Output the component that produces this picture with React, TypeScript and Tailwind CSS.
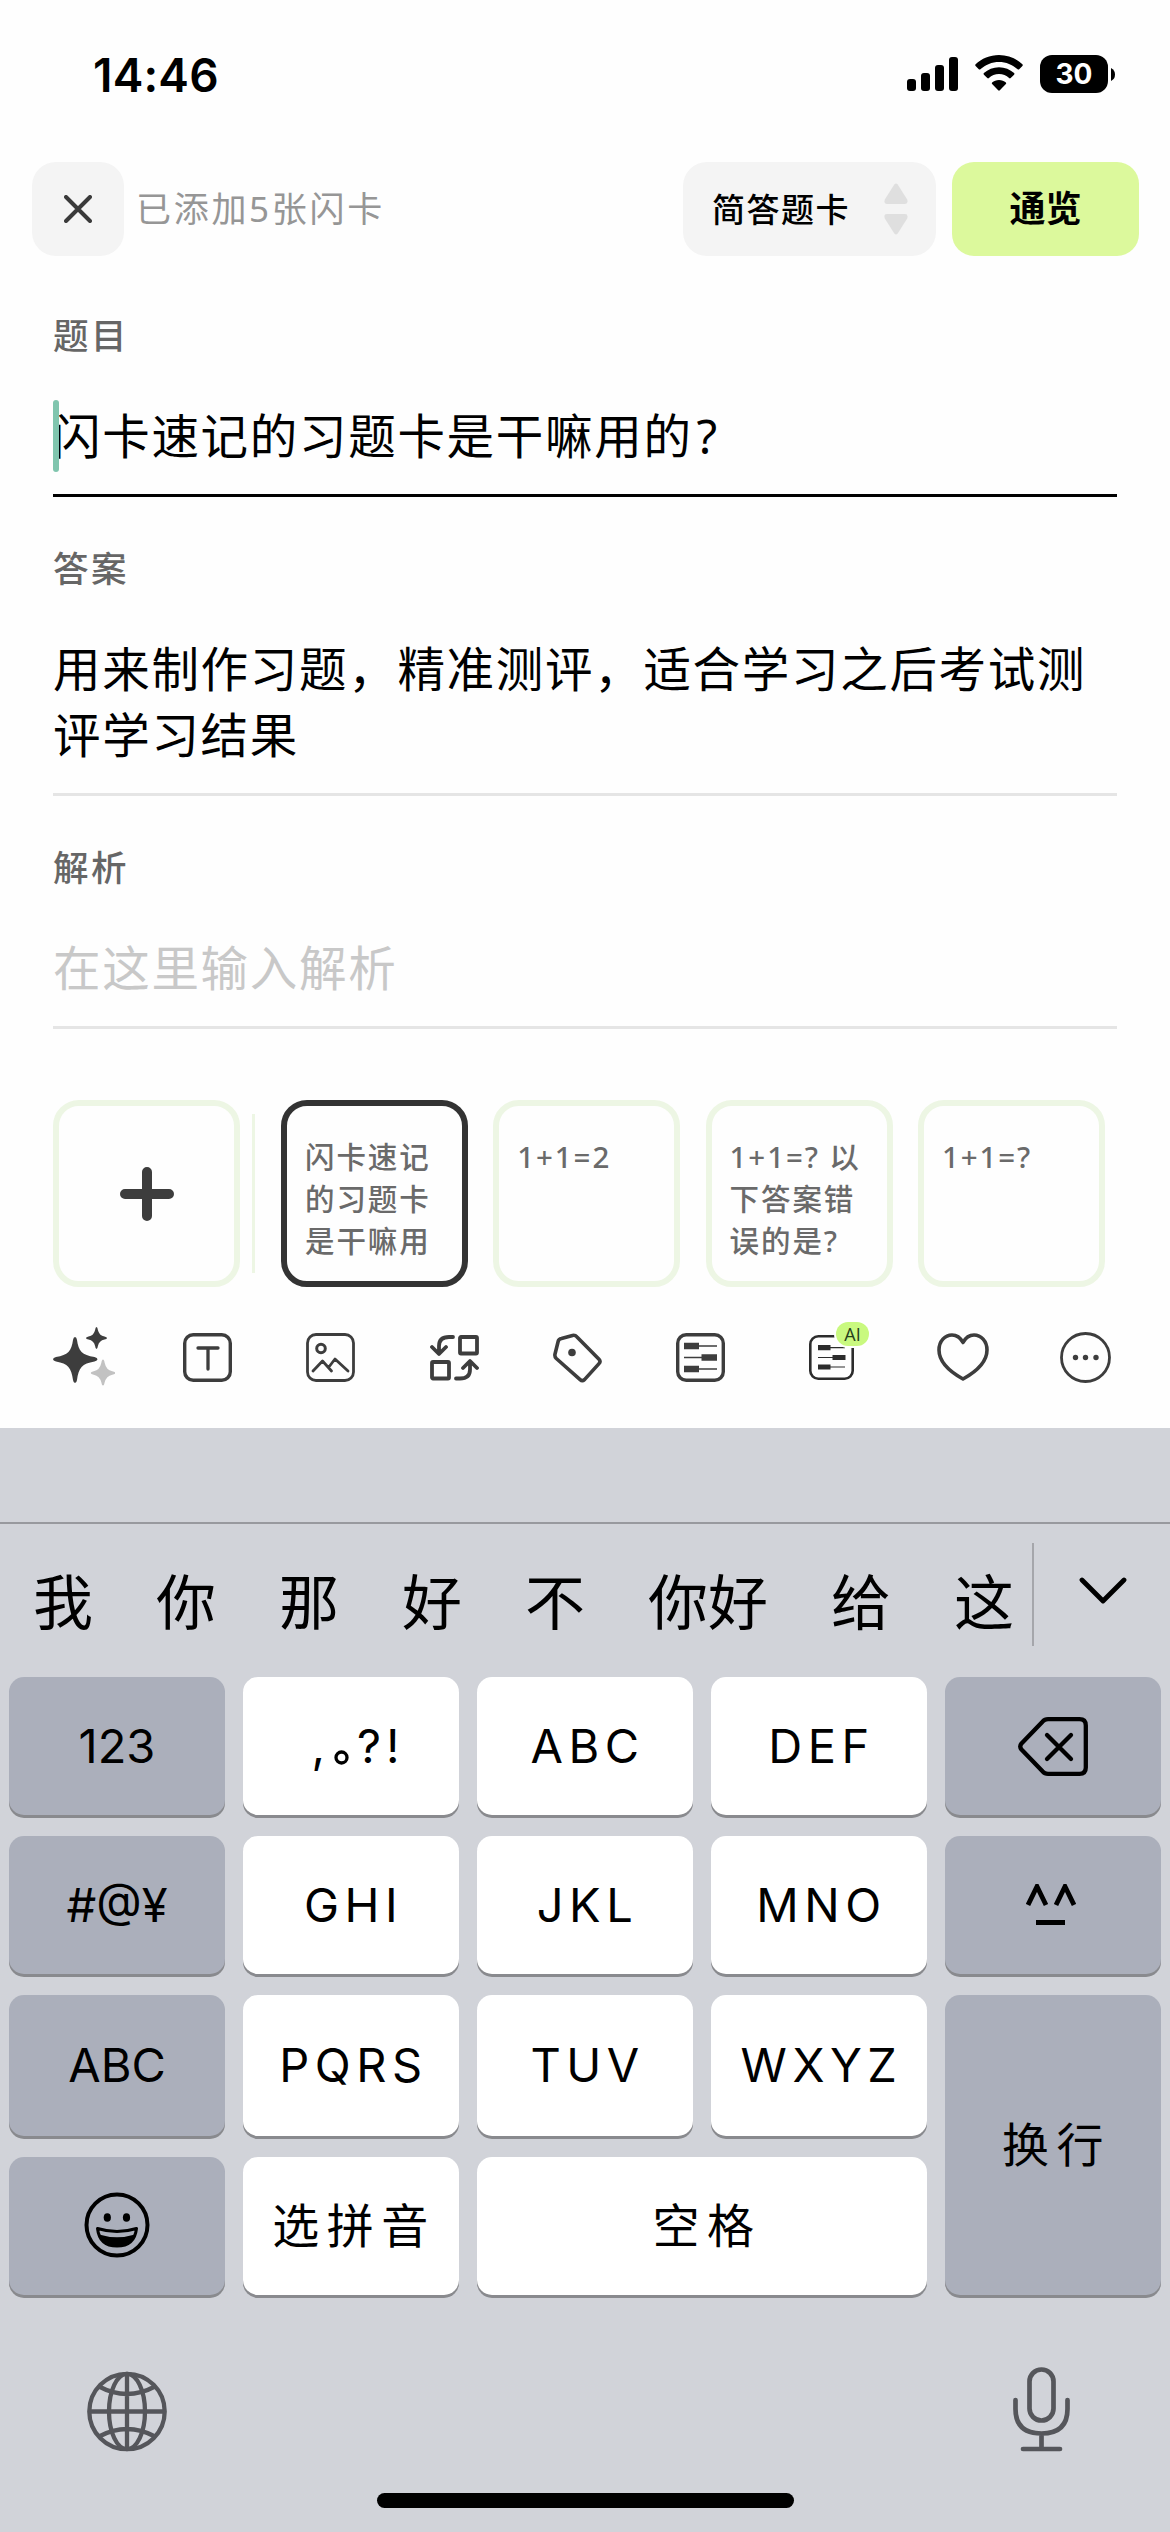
import type { ReactNode } from "react";

const cards = ["闪卡速记的习题卡是干嘛用", "1+1=2", "1+1=? 以下答案错误的是?", "1+1=?"];

function StatusBar() {
  return (
    <div className="flex h-[162px] items-start justify-between pl-[93px] pr-[55px]">
      <span className="mt-[44px] font-['Inter'] text-[46px] leading-[62px] font-semibold tracking-[0.2px]">
        14:46
      </span>
      <div className="mt-[55px] flex items-start">
        <svg className="mt-[2px] mr-[17px]" width="51" height="34" viewBox="0 0 51 34">
          <rect x="0" y="22" width="9" height="12" rx="3" />
          <rect x="14" y="16" width="9" height="18" rx="3" />
          <rect x="28" y="8" width="9" height="26" rx="3" />
          <rect x="42" y="0" width="9" height="34" rx="3" />
        </svg>
        <svg className="mr-[17px]" width="48" height="36" viewBox="0 0 48 36">
          <path d="M24 0C15 0 6.500 3.500 .6 9.300q-.8.800 0 1.600l3.200 3.300q.8.800 1.600 0C10.500 9.500 17 6.900 24 6.900s13.500 2.600 18.600 7.300q.8.800 1.600 0l3.200-3.300q.8-.8 0-1.600C41.500 3.500 33 0 24 0z" />
          <path d="M24 12.200c-5.800 0-11.100 2.200-15.100 5.900q-.8.800 0 1.600l3.400 3.400q.8.700 1.600 0c2.700-2.500 6.200-4 10.100-4s7.400 1.500 10.100 4q.8.700 1.600 0l3.400-3.400q.8-.8 0-1.600C35.100 14.400 29.800 12.200 24 12.200z" />
          <path d="M24 25c-2.700 0-5.100 1-6.900 2.600q-.7.800 0 1.500l6.100 6.200q.8.700 1.600 0l6.100-6.200q.7-.7 0-1.500c-1.800-1.600-4.200-2.600-6.900-2.600z" />
        </svg>
        <div className="flex h-[38px] w-[68px] items-center justify-center rounded-[12px] bg-black font-['Inter'] text-[28px] font-bold text-white">
          30
        </div>
        <svg className="mt-[13px] ml-[3px]" width="4" height="13" viewBox="0 0 4 13">
          <path d="M0 0q4 2 4 6.500T0 13z" />
        </svg>
      </div>
    </div>
  );
}

function TopBar() {
  return (
    <div className="flex h-[94px] items-center pl-[32px] pr-[31px]">
      <button className="flex h-[94px] w-[92px] items-center justify-center rounded-[24px] bg-[#f4f4f4]">
        <svg width="28" height="28" viewBox="0 0 28 28" stroke="#3a3a3a" strokeWidth="4" strokeLinecap="round">
          <path d="M2 2l24 24M26 2L2 26" />
        </svg>
      </button>
      <span className="ml-[12px] text-[35px] tracking-[2.700px] text-[#969696]">已添加5张闪卡</span>
      <button className="ml-auto flex h-[94px] w-[253px] items-center justify-between rounded-[24px] bg-[#f4f4f4] pr-[28px] pl-[29px]">
        <span className="mt-[2px] text-[33px] font-medium tracking-[1.500px]">简答题卡</span>
        <svg width="24" height="52" viewBox="0 0 24 52" fill="#dfdfdf">
          <path d="M10.300 1.500q1.700-2 3.400 0l9.500 15q1.300 4.500-2.200 4.500H3q-3.500 0-2.200-4.500z" />
          <path d="M10.300 50.500q1.700 2 3.400 0l9.500-15q1.300-4.500-2.200-4.500H3q-3.500 0-2.200 4.500z" />
        </svg>
      </button>
      <button className="ml-[16px] h-[94px] w-[187px] rounded-[22px] bg-[#dcf99c] text-[36px] font-bold">
        通览
      </button>
    </div>
  );
}

function Field({ label, line, children }: { label: string; line: string; children: ReactNode }) {
  return (
    <div className={"border-b-[3px] " + line}>
      <div className="h-[50px] text-[35.500px] leading-[49px] font-medium tracking-[2.500px] text-[#666]">{label}</div>
      <div className="relative mt-[42px] pb-[25px] text-[47.500px] leading-[66px] tracking-[1.700px]">{children}</div>
    </div>
  );
}

function CardStrip() {
  return (
    <div className="mt-[71px] flex h-[187px] items-center pl-[53px]">
      <div className="flex h-[187px] w-[187px] items-center justify-center rounded-[26px] border-[6px] border-[#edf6e4]">
        <svg width="54" height="54" viewBox="0 0 54 54" stroke="#3d3d3d" strokeWidth="10" strokeLinecap="round">
          <path d="M27 5v44M5 27h44" />
        </svg>
      </div>
      <div className="ml-[12px] h-[159px] w-[3px] bg-[#edf6e4]" />
      <div className="ml-[26px] flex gap-[25.300px]">
        {cards.map((text, i) => (
          <div
            key={text}
            className={
              "h-[187px] w-[187px] rounded-[26px] border-[6px] pt-[30px] pl-[18px] text-[29.500px] leading-[42px] font-medium tracking-[1.900px] text-[#6a6a6a] " +
              (i === 0 ? "border-[#333]" : "border-[#edf6e4]")
            }
          >
            <div className="w-[146px] break-all">{text}</div>
          </div>
        ))}
      </div>
    </div>
  );
}

function ToolRow() {
  return (
    <div className="mt-[37px] flex h-[104px] items-start pl-[53px]">
      <svg className="mr-[68px]" width="62" height="62" viewBox="0 0 62 62" fill="#3d3d3d">
        <path d="M22 13q1.500 0 2 3c1.500 11 5 15 17.500 17q3 .7 3 2.200t-3 2.200C29 39.400 25.500 44 24 56q-.5 3-2 3t-2-3C18.500 44 15 39.400 3 37.400q-3-.7-3-2.200T3 33c12-2 15.500-6 17-17q.5-3 2-3z" />
        <path d="M43.500 3q1 0 1.400 3 1.200 5.500 6.600 6.600 2.500.5 2.500 1.500t-2.500 1.500q-5.400 1.200-6.600 6.400-.4 3-1.400 3t-1.400-3q-1.200-5.200-6.600-6.400-2.500-.5-2.500-1.500t2.500-1.500q5.400-1.100 6.600-6.600.4-3 1.400-3z" />
        <path fill="#c2c2c2" d="M50 35.500q1.200 0 1.700 3.500 1.500 7 7.600 8.300 3 .6 3 1.700t-3 1.700q-6.100 1.400-7.600 7.600-.5 3.300-1.700 3.300t-1.700-3.300q-1.500-6.200-7.600-7.600-3-.6-3-1.700t3-1.700q6.100-1.300 7.600-8.300.5-3.500 1.700-3.500z" />
      </svg>
      <svg className="mt-[9px] mr-[74px]" width="49" height="49" viewBox="0 0 49 49" fill="none" stroke="#3d3d3d">
        <rect x="1.700" y="1.700" width="45.600" height="45.600" rx="8.500" strokeWidth="3.400" />
        <path d="M15 15h20M25 15v21" strokeWidth="3.300" strokeLinecap="round" />
      </svg>
      <svg className="mt-[9px] mr-[75px]" width="49" height="49" viewBox="0 0 49 49" fill="none" stroke="#3d3d3d" strokeLinecap="round" strokeLinejoin="round">
        <rect x="1.500" y="1.500" width="46" height="46" rx="8.500" strokeWidth="2.800" />
        <circle cx="15" cy="15.500" r="4.300" strokeWidth="3" />
        <path d="M7 38l9.500-10 9 10M22.500 34.500L29 26l13 12" strokeWidth="2.800" />
      </svg>
      <svg className="mt-[11px] mr-[74px]" width="49" height="46" viewBox="0 0 49 46" fill="none" stroke="#3d3d3d" strokeWidth="3.800" strokeLinecap="round" strokeLinejoin="round">
        <rect x="30" y="2" width="17" height="16.500" rx="1" />
        <rect x="2" y="27" width="17" height="16.500" rx="1" />
        <path d="M23 2h-4q-10 0-10 9v6M2 12l7 7 7-7" />
        <path d="M26 43.500h4q10 0 10-9V28M33 33l7-7 7 7" />
      </svg>
      <svg className="mt-[9px] mr-[74px]" width="49" height="50" viewBox="0 0 49 50" fill="none" stroke="#3d3d3d">
        <path d="M8.500 5.500L19.500 2.400q2.600-.6 4.500 1.500L46 26.300q2 2.200 0 4.300L31.500 46.600q-2.200 2-4.400 0L3.300 25.500q-1.700-1.700-1.400-4L5.200 8.200q.5-2 3.300-2.700z" strokeWidth="3.600" strokeLinejoin="round" />
        <circle cx="19" cy="19.500" r="3.800" fill="#3d3d3d" stroke="none" />
      </svg>
      <svg className="mt-[9px] mr-[84px]" width="49" height="49" viewBox="0 0 49 49" fill="none" stroke="#3d3d3d">
        <rect x="1.700" y="1.700" width="45.600" height="45.600" rx="8.500" strokeWidth="3.400" />
        <path d="M22 13h19M8 24.500h19M22 36h19" strokeWidth="1.400" />
        <path d="M8 13h15M25.500 24.500h15.500M8 36h15" strokeWidth="6.500" />
      </svg>
      <div className="relative mt-[11px] mr-[83px]">
        <svg width="45" height="45" viewBox="0 0 45 45" fill="none" stroke="#2c2c2c">
          <rect x="1.300" y="1.300" width="42.400" height="42.400" rx="8" strokeWidth="2.600" />
          <path d="M20 12.700h16M9 22.500h16M20 32h16" strokeWidth="1.200" />
          <path d="M9 12.700h12.500M23.500 22.500h13M9 32h12.500" strokeWidth="5.200" />
        </svg>
        <span className="absolute top-[-13px] left-[27px] flex h-[24px] w-[33px] items-center justify-center rounded-full bg-[#c9f97f] font-['Open_Sans'] text-[18px] text-[#26401c] ring-2 ring-white">
          AI
        </span>
      </div>
      <svg className="mt-[9px] mr-[71px]" width="52" height="48" viewBox="0 0 52 48" fill="none" stroke="#3d3d3d" strokeWidth="3.600" strokeLinejoin="round">
        <path d="M26 46C17 41 2 31.500 2 17 2 8 8 2 15 2q7 0 11 7.500Q30 2 37 2c7 0 13 6 13 15 0 14.500-15 24-24 29z" />
      </svg>
      <svg className="mt-[8px]" width="51" height="51" viewBox="0 0 51 51" fill="#3d3d3d">
        <circle cx="25.500" cy="25.500" r="24" fill="none" stroke="#3d3d3d" strokeWidth="2.800" />
        <circle cx="15.500" cy="25.500" r="2.700" />
        <circle cx="25.500" cy="25.500" r="2.700" />
        <circle cx="36" cy="25.500" r="2.700" />
      </svg>
    </div>
  );
}

function Key({ children, className = "bg-white tracking-[5.500px] pl-[5px]" }: { children: ReactNode; className?: string }) {
  return (
    <div className={"flex items-center justify-center rounded-[15px] shadow-[0_3px_0_#898a8e] " + className}>
      {children}
    </div>
  );
}

const gray = "bg-[#abafbb]";

function Keyboard() {
  return (
    <div className="h-[1104px] bg-[#d1d3d9]">
      <div className="h-[94px]" />
      <div className="h-[2px] bg-[#98999e]" />
      <div className="flex h-[153px] items-start">
        <div className="flex w-[1032px] gap-[63px] pt-[36px] pl-[33px] text-[60px] leading-[84px] whitespace-nowrap">
          <span>我</span>
          <span>你</span>
          <span>那</span>
          <span>好</span>
          <span>不</span>
          <span>你好</span>
          <span>给</span>
          <span>这</span>
        </div>
        <div className="mt-[19px] h-[103px] w-[2px] bg-[#a5a6ab]" />
        <svg className="mt-[53px] ml-[45px]" width="48" height="28" viewBox="0 0 48 28" fill="none" stroke="black" strokeWidth="4.800" strokeLinecap="round" strokeLinejoin="round">
          <path d="M3 3l21 21L45 3" />
        </svg>
      </div>
      <div className="grid grid-cols-[repeat(5,216px)] grid-rows-[138px_138px_141px_138px] gap-x-[18px] gap-y-[21px] pl-[9px] font-['Inter','Noto_Sans_CJK_SC',sans-serif] text-[47px]">
        <Key className={gray}>123</Key>
        <Key className="bg-white tracking-[5px] pl-[14px]">
          <span>,</span>
          <svg className="mt-[23px] mr-[8px] ml-[4px]" width="15" height="15" viewBox="0 0 15 15" fill="none" stroke="black" strokeWidth="3.300">
            <circle cx="7.500" cy="7.500" r="5.500" />
          </svg>
          <span>?!</span>
        </Key>
        <Key>ABC</Key>
        <Key>DEF</Key>
        <Key className={gray}>
          <svg width="70" height="59" viewBox="0 0 70 59" fill="none" stroke="black" strokeWidth="4.300" strokeLinecap="round" strokeLinejoin="round">
            <path d="M30 2.200h31.500q6.300 0 6.300 6.300v42q0 6.300-6.300 6.300H30q-3.300 0-5.500-2.500L3.500 32.500q-2.500-3 0-6L24.500 4.700Q26.700 2.200 30 2.200z" />
            <path d="M29 18l24 24M53 18L29 42" />
          </svg>
        </Key>

        <Key className={gray}>#@¥</Key>
        <Key>GHI</Key>
        <Key>JKL</Key>
        <Key>MNO</Key>
        <Key className={gray}>
          <svg className="mr-[4px]" width="50" height="42" viewBox="0 0 50 42" fill="none" stroke="black" strokeWidth="4.800">
            <path d="M2 21L11 2.500 20 21M30 21L39 2.500 48 21M10 38.500h29" />
          </svg>
        </Key>

        <Key className={gray}>ABC</Key>
        <Key>PQRS</Key>
        <Key>TUV</Key>
        <Key>WXYZ</Key>
        <Key className={gray + " row-span-2 tracking-[7.500px] pl-[7px]"}>换行</Key>

        <Key className={gray}>
          <svg className="mb-[2px]" width="66" height="66" viewBox="0 0 66 66">
            <circle cx="33" cy="33" r="30.500" fill="none" stroke="black" strokeWidth="4" />
            <ellipse cx="23.300" cy="25.500" rx="3.600" ry="4.300" />
            <ellipse cx="42.500" cy="25.500" rx="3.600" ry="4.300" />
            <path d="M13.500 36.500Q33 42.500 52.500 36.500 50.500 54 33 54T13.500 36.500z" fill="none" stroke="black" strokeWidth="3" strokeLinejoin="round" />
            <path d="M15 42.500Q33 48 51 42.500 47 54 33 54T15 42.500z" />
          </svg>
        </Key>
        <Key className="bg-white pl-[6px] tracking-[7.500px]">选拼音</Key>
        <Key className="col-span-2 bg-white pl-[10px] tracking-[7.500px]">空格</Key>
      </div>
      <div className="mt-[72px] flex items-start justify-between pr-[100px] pl-[87px]">
        <svg className="mt-[4px]" width="80" height="81" viewBox="0 0 80 81" fill="none" stroke="#55565b" strokeWidth="4.300">
          <circle cx="40" cy="40.500" r="37.700" />
          <ellipse cx="40" cy="40.500" rx="18" ry="37.700" />
          <path d="M40 3v75M2 40.500h76M12 15.500q28 15 56 0M12 65.500q28-15 56 0" />
        </svg>
        <svg width="57" height="85" viewBox="0 0 57 85" fill="none" stroke="#55565b" strokeWidth="4.700" strokeLinecap="round">
          <rect x="16.500" y="2.500" width="24" height="51" rx="12" />
          <path d="M2.500 33v9q0 24.500 26 24.500t26-24.500v-9M28.500 67v14M10 82h37" />
        </svg>
      </div>
      <div className="mx-auto mt-[41px] h-[15px] w-[417px] rounded-full bg-black" />
    </div>
  );
}

export default function App() {
  return (
    <div className="h-[2532px] w-[1170px] overflow-hidden bg-[#fefefe] font-['Noto_Sans','Noto_Sans_CJK_SC',sans-serif] text-black">
      <StatusBar />
      <TopBar />
      <div className="mt-[55px] flex flex-col gap-[47px] px-[53px]">
        <Field label="题目" line="border-black">
          <span className="absolute top-[-3px] left-0 h-[72px] w-[6px] rounded-full bg-[#80c5ae]" />
          闪卡速记的习题卡是干嘛用的<span className="ml-[4px]">?</span>
        </Field>
        <Field label="答案" line="border-[#e5e5e5]">
          用来制作习题，精准测评，适合学习之后考试测评学习结果
        </Field>
        <Field label="解析" line="border-[#e5e5e5]">
          <span className="text-[#c8c8c8]">在这里输入解析</span>
        </Field>
      </div>
      <CardStrip />
      <ToolRow />
      <Keyboard />
    </div>
  );
}
